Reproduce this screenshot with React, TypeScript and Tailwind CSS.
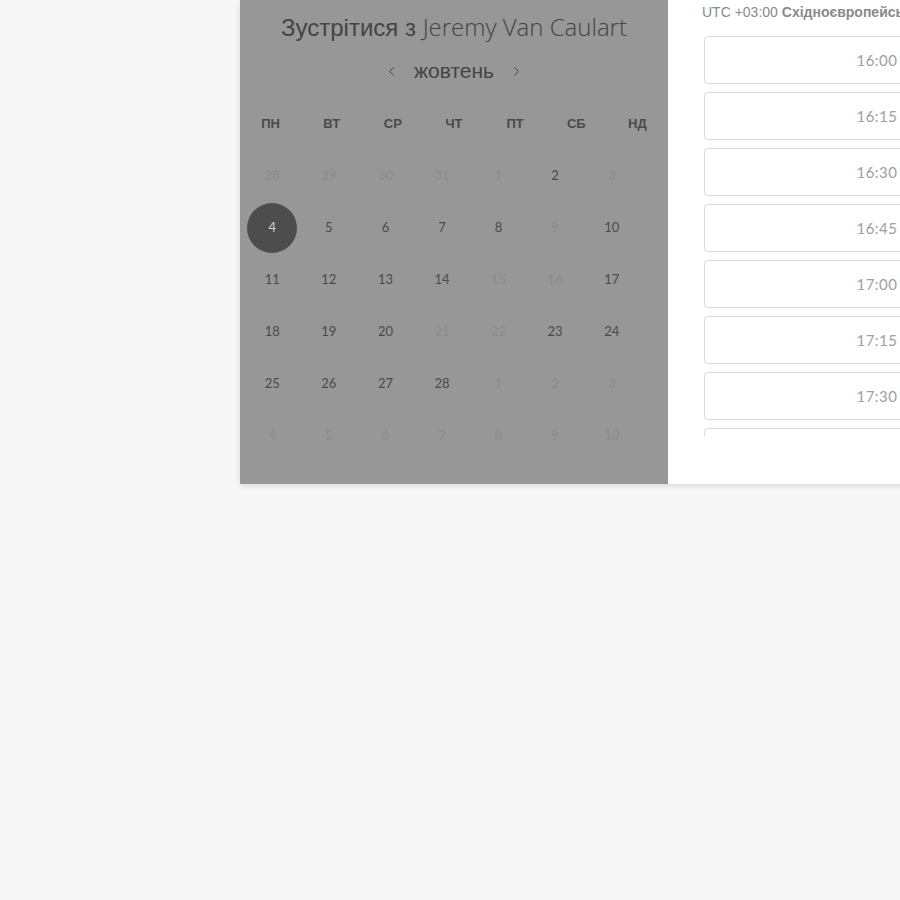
import { ChevronLeft, ChevronRight } from "lucide-react";

type Day = { n: number; state: "on" | "off" | "sel" };

const weekDays = ["ПН", "ВТ", "СР", "ЧТ", "ПТ", "СБ", "НД"];

const rows: Day[][] = [
  [28, 29, 30, 31, 1, 2, 3].map((n) => ({ n, state: n === 2 ? "on" : "off" })),
  [4, 5, 6, 7, 8, 9, 10].map((n) => ({
    n,
    state: n === 4 ? "sel" : n === 9 ? "off" : "on",
  })),
  [11, 12, 13, 14, 15, 16, 17].map((n) => ({
    n,
    state: n === 15 || n === 16 ? "off" : "on",
  })),
  [18, 19, 20, 21, 22, 23, 24].map((n) => ({
    n,
    state: n === 21 || n === 22 ? "off" : "on",
  })),
  [25, 26, 27, 28, 1, 2, 3].map((n, i) => ({ n, state: i < 4 ? "on" : "off" })),
  [4, 5, 6, 7, 8, 9, 10].map((n) => ({ n, state: "off" })),
];

const times = ["16:00", "16:15", "16:30", "16:45", "17:00", "17:15", "17:30", "17:45"];

export default function App() {
  return (
    <div className="min-h-screen w-full overflow-hidden bg-[#f7f7f7]">
      <div className="ml-[240px] flex h-[484px] w-[820px] shadow-[0_2px_6px_rgba(0,0,0,0.12)]">

        {/* calendar side */}
        <div className="w-[428px] shrink-0 bg-[#979797] font-['Liberation_Sans',sans-serif]">
          <h1 className="mt-[12px] h-[30px] whitespace-nowrap text-center text-[24px] leading-[30px] text-[#444]">
            Зустрітися з{" "}
            <span className="font-['Open_Sans',sans-serif] text-[24px] font-light">Jeremy Van Caulart</span>
          </h1>

          <div className="mt-[14px] flex h-[30px] items-center justify-center gap-[15px] text-[#444]">
            <ChevronLeft size={15} strokeWidth={1.6} />
            <span className="text-[21px] leading-[30px]">жовтень</span>
            <ChevronRight size={15} strokeWidth={1.6} />
          </div>

          <div className="mt-[23px] grid h-[30px] grid-cols-7 items-center text-center text-[13px] font-bold text-[#4a4a4a]">
            {weekDays.map((d) => (
              <span key={d}>{d}</span>
            ))}
          </div>

          <div className="ml-[4px] mt-[11px] grid w-[396px] grid-cols-7 font-['Lato',sans-serif] text-[13px]">
            {rows.flat().map((d, i) => (
              <div key={i} className="flex h-[52px] items-center justify-center">
                {d.state === "sel" ? (
                  <span className="flex h-[50px] w-[50px] items-center justify-center rounded-full bg-[#4d4d4d] text-[#d0d0d0]">
                    {d.n}
                  </span>
                ) : (
                  <span className={d.state === "on" ? "text-[#4a4a4a]" : "text-[#8c8c8c]"}>
                    {d.n}
                  </span>
                )}
              </div>
            ))}
          </div>
        </div>

        {/* time slots */}
        <div className="flex-1 bg-white">
          <div className="h-[24px] whitespace-nowrap pl-[34px] font-['Liberation_Sans',sans-serif] text-[14px] leading-[24px] text-[#8a8a8a]">
            UTC +03:00 <span className="font-bold">Східноєвропейський час</span>
          </div>

          <div className="ml-[36px] mt-[12px] flex h-[400px] flex-col gap-[8px] overflow-hidden">
            {times.map((t) => (
              <button
                key={t}
                className="h-[48px] w-[346px] shrink-0 rounded-[4px] border border-[#dcdcdc] bg-white text-center font-['Lato',sans-serif] text-[15px] tracking-[0.5px] text-[#a0a0a0]"
              >
                {t}
              </button>
            ))}
          </div>
        </div>

      </div>
    </div>
  );
}
